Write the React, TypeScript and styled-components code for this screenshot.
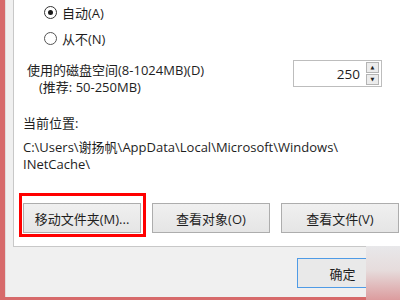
import React from "react";
import styled, { createGlobalStyle } from "styled-components";

const GlobalStyle = createGlobalStyle`
  html, body {
    margin: 0;
    padding: 0;
    background: #d76a6b;
  }
  body {
    font-family: "Open Sans", "Noto Sans CJK SC", sans-serif;
    font-size: 13px;
    color: #1e1e1e;
  }
`;

const App: React.FC = () => {
  return (
    <>
      <GlobalStyle />
      <Frame>
        <Window>
          <Panel>
            <RadioRow style={{ marginTop: 2 }}>
              <Radio checked />
              <span>自动(A)</span>
            </RadioRow>
            <RadioRow style={{ marginTop: 6 }}>
              <Radio />
              <span>从不(N)</span>
            </RadioRow>

            <DiskRow>
              <DiskLabel>
                <div>使用的磁盘空间(8-1024MB)(D)</div>
                <div className="hint">(推荐: 50-250MB)</div>
              </DiskLabel>
              <Spinner>
                <SpinValue>250</SpinValue>
                <SpinButtons>
                  <SpinButton>▲</SpinButton>
                  <SpinButton>▼</SpinButton>
                </SpinButtons>
              </Spinner>
            </DiskRow>

            <Location>
              <div className="location__title">当前位置:</div>
              <div className="location__path">
                C:\Users\谢扬帆\AppData\Local\Microsoft\Windows\
                <br />
                INetCache\
              </div>
            </Location>

            <ButtonRow>
              <Button highlighted>移动文件夹(M)...</Button>
              <Button>查看对象(O)</Button>
              <Button>查看文件(V)</Button>
            </ButtonRow>
          </Panel>

          <Footer>
            <OkButton>确定</OkButton>
          </Footer>
        </Window>
        <Corner />
      </Frame>
    </>
  );
};

const Frame = styled.div`
  position: relative;
  width: 400px;
  height: 300px;
  overflow: hidden;
  box-sizing: border-box;
  padding: 0 0 3px 5px;
  background: #d76a6b;
  display: flex;
`;

const Window = styled.div`
  flex: 1;
  display: flex;
  flex-direction: column;
  background: #f0f0f0;
  border-left: 1px solid #e2dada;
  padding-left: 7px;
`;

const Panel = styled.div`
  box-sizing: border-box;
  height: 247px;
  background: #fff;
  border-left: 1px solid #c8c8c8;
  border-bottom: 1px solid #c8c8c8;
  display: flex;
  flex-direction: column;
`;

const RadioRow = styled.div`
  display: flex;
  align-items: center;
  height: 20px;
  margin-left: 30px;
  gap: 5px;
`;

const Radio = styled.span<{ checked?: boolean }>`
  box-sizing: border-box;
  width: 13px;
  height: 13px;
  border-radius: 50%;
  border: 1px solid ${({ checked }) => (checked ? "#333" : "#555")};
  background: #fff;
  display: flex;
  align-items: center;
  justify-content: center;

  &::after {
    content: "";
    width: 5px;
    height: 5px;
    border-radius: 50%;
    background: ${({ checked }) => (checked ? "#1a1a1a" : "transparent")};
  }
`;

const DiskRow = styled.div`
  display: flex;
  justify-content: space-between;
  align-items: flex-start;
  margin-top: 12px;
  padding-right: 18px;
`;

const DiskLabel = styled.div`
  margin-left: 13px;
  padding-top: 2px;
  line-height: 17px;

  .hint {
    margin-left: 12px;
  }
`;

const Spinner = styled.div`
  box-sizing: border-box;
  width: 89px;
  height: 27px;
  border: 1px solid #bdbdbd;
  background: #fff;
  display: flex;
  align-items: center;
  padding-right: 2px;
`;

const SpinValue = styled.span`
  flex: 1;
  text-align: right;
  padding-right: 6px;
  font-size: 13.5px;
`;

const SpinButtons = styled.div`
  display: flex;
  flex-direction: column;
  gap: 1px;
`;

const SpinButton = styled.span`
  box-sizing: border-box;
  width: 13px;
  height: 11px;
  border: 1px solid #b4b4b4;
  background: #ececec;
  font-size: 5px;
  line-height: 9px;
  text-align: center;
  color: #222;
  font-family: "DejaVu Sans", sans-serif;
`;

const Location = styled.div`
  margin: 19px 0 0 9px;
  line-height: 17px;

  .location__path {
    margin-top: 7px;
  }
`;

const ButtonRow = styled.div`
  display: flex;
  gap: 11px;
  margin: 30px 0 0 9px;
`;

const Button = styled.div<{ highlighted?: boolean }>`
  position: relative;
  box-sizing: border-box;
  width: 118px;
  height: 30px;
  border: 1px solid #adadad;
  background: linear-gradient(#f0f0f0, #e5e5e5);
  display: flex;
  align-items: center;
  justify-content: center;

  &::after {
    content: "";
    display: ${({ highlighted }) => (highlighted ? "block" : "none")};
    position: absolute;
    left: -5px;
    top: -11px;
    right: -6px;
    bottom: -5px;
    border: 3px solid #ff0000;
  }
`;

const Footer = styled.div`
  flex: 1;
  display: flex;
  justify-content: flex-end;
  align-items: flex-start;
  padding: 11px 12px 0 0;
`;

const OkButton = styled.div`
  box-sizing: border-box;
  width: 91px;
  height: 30px;
  border: 1px solid #4f9be6;
  background: #e9e9e9;
  display: flex;
  align-items: center;
  justify-content: center;
`;

const Corner = styled.div`
  position: absolute;
  right: 0;
  bottom: 0;
  width: 34px;
  height: 54px;
  background: linear-gradient(#e8e8ea 0%, #e6dcdc 45%, #dc9c9e 100%);
`;

export default App;
